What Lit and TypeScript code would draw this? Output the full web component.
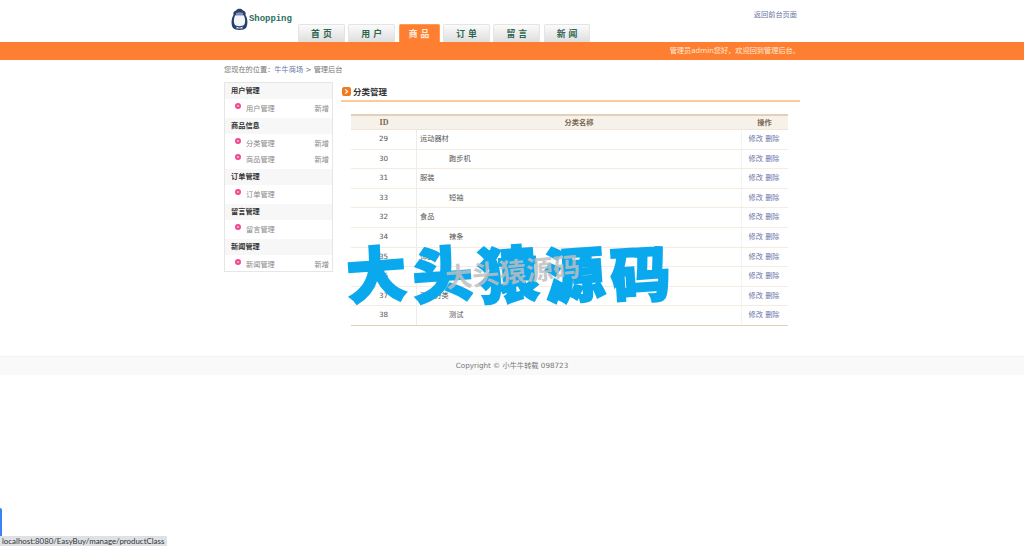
import { html, css, LitElement } from 'lit';
import { customElement } from 'lit/decorators.js';

const tabs = [
  { label: '首 页', width: 46.8 },
  { label: '用 户', width: 46.8 },
  { label: '商 品', width: 41, active: true },
  { label: '订 单', width: 46.8 },
  { label: '留 言', width: 46.8 },
  { label: '新 闻', width: 46.8 },
];

const menu = [
  { title: '用户管理', items: [{ name: '用户管理', add: true }] },
  { title: '商品信息', items: [{ name: '分类管理', add: true }, { name: '商品管理', add: true }] },
  { title: '订单管理', items: [{ name: '订单管理' }] },
  { title: '留言管理', items: [{ name: '留言管理' }] },
  { title: '新闻管理', items: [{ name: '新闻管理', add: true }] },
];

const rows = [
  { id: 29, name: '运动器材' },
  { id: 30, name: '跑步机', child: true },
  { id: 31, name: '服装' },
  { id: 33, name: '短袖', child: true },
  { id: 32, name: '食品' },
  { id: 34, name: '辣条', child: true },
  { id: 35, name: '饰品' },
  { id: 36, name: '项链', child: true },
  { id: 37, name: '测试分类' },
  { id: 38, name: '测试', child: true },
];

@customElement('app-root')
export class AppRoot extends LitElement {
  static styles = [css`
    :host {
      display: block;
      position: relative;
      height: 546px;
      overflow: hidden;
      background: #fff;
      font-family: "DejaVu Sans", "Noto Sans CJK SC", sans-serif;
      font-size: 7.2px;
      color: #777;
    }

    a {
      color: #6b74a8;
      text-decoration: none;
    }

    .wrap {
      width: 576px;
      margin: 0 auto;
    }

    /* Header */
    .top {
      display: flex;
      height: 42px;
      position: relative;
    }

    .logo {
      display: flex;
      align-items: flex-start;
      width: 74px;
      padding: 7px 0 0 6px;
      box-sizing: border-box;
    }

    .logo b {
      margin-top: 6px;
      font: bold 9px/12px "Liberation Mono", monospace;
      letter-spacing: -0.05px;
      color: #2e6f63;
    }

    .tabs {
      display: flex;
      align-items: flex-end;
      gap: 3.5px;
    }

    .tab {
      height: 18px;
      box-sizing: border-box;
      border: 1px solid #e4e4e4;
      border-bottom: 0;
      border-radius: 2px 2px 0 0;
      background: linear-gradient(#fbfbfb, #dedede);
      font: bold 8.8px/18px "DejaVu Sans", "Noto Sans CJK SC", sans-serif;
      text-align: center;
      color: #2f6650;
    }

    .tab.active {
      border-color: #ff9a4f;
      background: #ff7f32;
      color: #ffeedd;
    }

    .back {
      margin-left: auto;
      padding: 9px 3px 0 0;
    }

    .bar {
      height: 18px;
      background: #ff7f32;
      color: #ffe9d6;
      line-height: 18px;
    }

    .bar .wrap {
      text-align: right;
    }

    .crumb {
      height: 22px;
      line-height: 20px;
    }

    /* Body */
    .body {
      display: flex;
      align-items: flex-start;
      gap: 8px;
    }

    .side {
      width: 109px;
      height: 190px;
      box-sizing: border-box;
      border: 1px solid #e6e6e6;
    }

    .side h4 {
      margin: 0;
      height: 16px;
      padding-left: 6px;
      background: #f7f7f7;
      font-size: 7.2px;
      font-weight: bold;
      line-height: 15px;
      color: #333;
    }

    .side ul {
      list-style: none;
      margin: 0;
      padding: 1px 0 2px;
    }

    .side li {
      display: flex;
      align-items: center;
      height: 16px;
      padding: 0 3px 0 10px;
      color: #888;
    }

    .dot {
      display: block;
      flex: none;
      width: 6px;
      height: 6px;
      margin: -4px 5px 0 0;
      border-radius: 50%;
      background: #ffc4dc;
      box-sizing: border-box;
      border: 2px solid #f5468f;
    }

    .add {
      margin-left: auto;
    }

    .main {
      flex: 1;
    }

    .title {
      display: flex;
      align-items: center;
      gap: 2px;
      height: 18px;
      padding-left: 1px;
      border-bottom: 2px solid #ffc999;
      font-size: 8.5px;
      font-weight: bold;
      color: #333;
    }

    .title svg {
      display: block;
    }

    .list {
      width: 437px;
      margin: 12px 0 0 10px;
    }

    .row {
      display: grid;
      grid-template-columns: 66px 1fr 47px;
      height: 19.6px;
      box-sizing: border-box;
      border-bottom: 1px solid #f5ebe0;
      line-height: 18.6px;
      color: #555;
    }

    .row > div:first-child {
      border-right: 1px solid #ececec;
      text-align: center;
      color: #555;
    }

    .row .name {
      padding-left: 3px;
    }

    .row .name.child {
      padding-left: 32px;
    }

    .row .ops {
      border-left: 1px solid #f3f3f3;
      padding-right: 2px;
      text-align: center;
    }

    .row.head {
      height: 16px;
      border-top: 2px solid #e6cfb8;
      border-bottom: 1px solid #efe6da;
      background: #f6f2ea;
      line-height: 13px;
      font-weight: bold;
      color: #7a6650;
    }

    .row.head > div {
      border: 0;
      text-align: center;
      color: #7a6650;
    }

    .row.head > div:first-child {
      border: 0;
      font-family: "Liberation Serif", serif;
      font-size: 8px;
      color: #7a6650;
    }

    .row.last {
      border-bottom: 1px solid #e6cfb8;
    }

    .foot {
      margin-top: 30px;
      height: 19px;
      box-sizing: border-box;
      border-top: 1px solid #f2f2f2;
      background: #f9f9f9;
      text-align: center;
      line-height: 18px;
      color: #777;
    }

    /* Overlays */
    .mark {
      position: absolute;
      left: 346px;
      top: 238px;
      display: flex;
      gap: 6px;
      font: 900 60px/66px "Noto Sans CJK SC", sans-serif;
      color: #0aa9ee;
      -webkit-text-stroke: 2px #0aa9ee;
      pointer-events: none;
    }

    .mark span {
      display: block;
      transform: rotate(-4deg);
    }

    .mark-light {
      position: absolute;
      left: 445px;
      top: 254px;
      font: 700 27px/34px "Noto Sans CJK SC", sans-serif;
      color: rgba(190, 190, 190, 0.85);
      transform: rotate(-5deg);
      pointer-events: none;
    }

    .status {
      position: fixed;
      left: 0;
      bottom: 0;
      width: 167px;
      height: 10px;
      padding-left: 2px;
      box-sizing: border-box;
      overflow: hidden;
      background: #dee1e6;
      font: 7.9px/11px Lato, sans-serif;
      color: #333;
      white-space: nowrap;
    }

    .edge {
      position: fixed;
      left: 0;
      top: 508px;
      width: 2px;
      height: 32px;
      border-radius: 0 2px 2px 0;
      background: #3b82f6;
    }
  `];

  renderLogo() {
    return html`<svg width="19" height="24" viewBox="0 0 19 24">
      <path d="M6 3.5C7 1 12 1 13 3.5C15.5 4 16 6 15.5 8C18 12 18 18 16 21C14 23.5 5 23.5 3 21C1 18 1 12 3.5 8C3 6 3.5 4 6 3.5Z" fill="#26406f"/>
      <path d="M5 8.5C7 7 12 7 14 8.5C15.5 12 15.5 16 14 18C12 19.5 7 19.5 5 18C3.5 16 3.5 12 5 8.5Z" fill="#f4f6fa"/>
      <path d="M6 6C8 5 11 5 13 6L13 8.5L6 8.5Z" fill="#7f8fb0"/>
      <path d="M6.5 19.5C8.5 21 10.5 21 12.5 19.5L12.5 21.5L6.5 21.5Z" fill="#dfe5f0"/>
    </svg>`;
  }

  render() {
    return html`
      <div class="wrap top">
        <div class="logo">${this.renderLogo()}<b>Shopping</b></div>
        <div class="tabs">
          ${tabs.map(t => html`<div class="tab ${t.active ? 'active' : ''}" style="width:${t.width}px">${t.label}</div>`)}
        </div>
        <a class="back" href="#">返回前台页面</a>
      </div>
      <div class="bar"><div class="wrap">管理员admin您好，欢迎回到管理后台。</div></div>
      <div class="wrap crumb">您现在的位置：<a href="#">牛牛商场</a> &gt; 管理后台</div>
      <div class="wrap body">
        <div class="side">
          ${menu.map(m => html`
            <h4>${m.title}</h4>
            <ul>
              ${m.items.map(i => html`<li><i class="dot"></i>${i.name}${i.add ? html`<span class="add">新增</span>` : ''}</li>`)}
            </ul>
          `)}
        </div>
        <div class="main">
          <div class="title">
            <svg width="9" height="9" viewBox="0 0 9 9">
              <rect width="9" height="9" rx="2" fill="#ee7a22"/>
              <path d="M3.2 2.4L5.6 4.5L3.2 6.6" fill="none" stroke="#fff" stroke-width="1.2"/>
            </svg>
            分类管理
          </div>
          <div class="list">
            <div class="row head"><div>ID</div><div>分类名称</div><div>操作</div></div>
            ${rows.map((r, i) => html`
              <div class="row ${i === rows.length - 1 ? 'last' : ''}">
                <div>${r.id}</div>
                <div class="name ${r.child ? 'child' : ''}">${r.name}</div>
                <div class="ops"><a href="#">修改</a> <a href="#">删除</a></div>
              </div>
            `)}
          </div>
        </div>
      </div>
      <div class="foot">Copyright © 小牛牛转载 098723</div>
      <div class="mark"><span>大</span><span>头</span><span>猿</span><span>源</span><span>码</span></div>
      <div class="mark-light">大头猿源码</div>
      <div class="edge"></div>
      <div class="status">localhost:8080/EasyBuy/manage/productClass</div>
    `;
  }
}
